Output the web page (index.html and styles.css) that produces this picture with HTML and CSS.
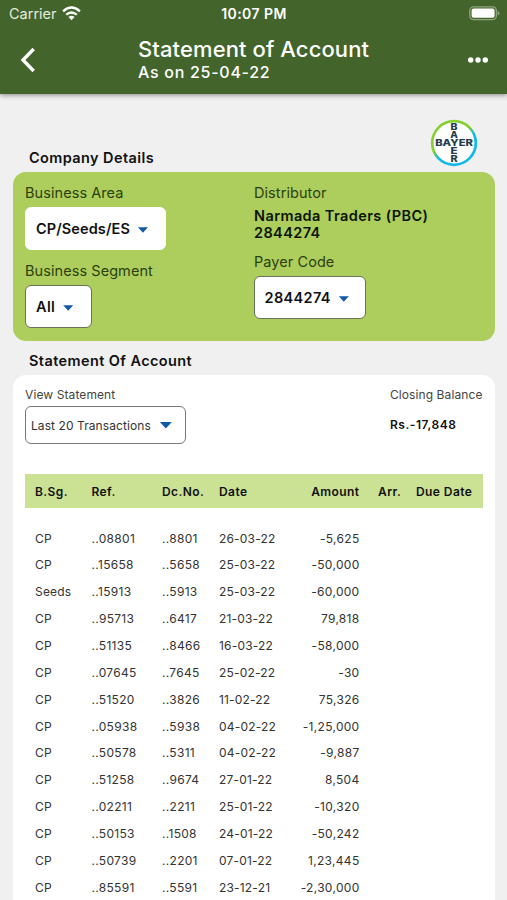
FILE: index.html
```html
<!DOCTYPE html>
<html lang="en">
<head>
<meta charset="utf-8">
<title>Statement of Account</title>
<link rel="stylesheet" href="styles.css">
</head>
<body>
<header class="appbar">
  <div class="status">
    <div class="carrier"><span>Carrier</span>
      <svg width="19" height="15" viewBox="0 0 19 15" fill="none" stroke="#fff" stroke-width="2.4"><path d="M1.1 5.4Q9.5-2.2 17.9 5.4M4.2 8.7Q9.5 4.2 14.8 8.7"/><path d="M6.4 10.9Q9.5 8.6 12.6 10.9L9.5 14.2Z" fill="#fff" stroke="none"/></svg>
    </div>
    <div class="clock">10:07 PM</div>
    <svg class="battery" width="31" height="15" viewBox="0 0 31 15"><rect x=".8" y=".8" width="26.6" height="12.8" rx="3.8" fill="none" stroke="#8fa57f" stroke-width="1.3"/><rect x="2.6" y="2.6" width="23" height="9.2" rx="2" fill="#fff"/><path d="M28.6 4.8Q30.4 5.6 30.4 7.2T28.6 9.6Z" fill="#8fa57f"/></svg>
  </div>
  <div class="nav">
    <svg class="back" width="16" height="26" viewBox="0 0 16 26"><path d="M13.7 2L3 13 13.7 24" fill="none" stroke="#fff" stroke-width="3.4"/></svg>
    <div class="titles"><h1>Statement of Account</h1><p>As on 25-04-22</p></div>
    <svg class="more" width="20" height="6" viewBox="0 0 20 6" fill="#fff"><circle cx="2.7" cy="3" r="2.7"/><circle cx="10" cy="3" r="2.7"/><circle cx="17.3" cy="3" r="2.7"/></svg>
  </div>
</header>
<main>
  <div class="section-head">
    <h2>Company Details</h2>
    <svg class="logo" width="48" height="48" viewBox="0 0 48 48">
      <defs><linearGradient id="ring" x1="0.2" y1="0.1" x2="0.75" y2="0.9"><stop offset=".4" stop-color="#83d030"/><stop offset=".62" stop-color="#10b8ee"/></linearGradient></defs>
      <circle cx="24" cy="24" r="21.8" fill="#fff" stroke="url(#ring)" stroke-width="2.7"/>
      <g class="logo-text"><text x="5.2" y="26.9" textLength="37.8" lengthAdjust="spacingAndGlyphs">BAYER</text>
      <text x="20.5" y="10.9" textLength="7" lengthAdjust="spacingAndGlyphs">B</text><text x="20.2" y="18.9" textLength="7.6" lengthAdjust="spacingAndGlyphs">A</text><text x="20.5" y="34.9" textLength="7" lengthAdjust="spacingAndGlyphs">E</text><text x="20.5" y="42.9" textLength="7.2" lengthAdjust="spacingAndGlyphs">R</text></g>
    </svg>
  </div>
  <section class="company">
    <div class="col">
      <div class="label">Business Area</div>
      <div class="select area">CP/Seeds/ES<i class="caret"></i></div>
      <div class="label segment">Business Segment</div>
      <div class="select seg">All<i class="caret"></i></div>
    </div>
    <div class="col">
      <div class="label">Distributor</div>
      <div class="dist">Narmada Traders (PBC)<br>2844274</div>
      <div class="label payer">Payer Code</div>
      <div class="select code">2844274<i class="caret"></i></div>
    </div>
  </section>
  <h2 class="soa">Statement Of Account</h2>
  <section class="statement">
    <div class="summary">
      <div><div class="small">View Statement</div><div class="period">Last 20 Transactions<i class="caret big"></i></div></div>
      <div><div class="small">Closing Balance</div><div class="balance">Rs.-17,848</div></div>
    </div>
    <div class="row head"><span>B.Sg.</span><span>Ref.</span><span>Dc.No.</span><span>Date</span><span class="num">Amount</span><span class="arr">Arr.</span><span>Due Date</span></div>
    <div class="rows">
      <div class="row"><span>CP</span><span>..08801</span><span>..8801</span><span>26-03-22</span><span class="num">-5,625</span></div>
      <div class="row"><span>CP</span><span>..15658</span><span>..5658</span><span>25-03-22</span><span class="num">-50,000</span></div>
      <div class="row"><span>Seeds</span><span>..15913</span><span>..5913</span><span>25-03-22</span><span class="num">-60,000</span></div>
      <div class="row"><span>CP</span><span>..95713</span><span>..6417</span><span>21-03-22</span><span class="num">79,818</span></div>
      <div class="row"><span>CP</span><span>..51135</span><span>..8466</span><span>16-03-22</span><span class="num">-58,000</span></div>
      <div class="row"><span>CP</span><span>..07645</span><span>..7645</span><span>25-02-22</span><span class="num">-30</span></div>
      <div class="row"><span>CP</span><span>..51520</span><span>..3826</span><span>11-02-22</span><span class="num">75,326</span></div>
      <div class="row"><span>CP</span><span>..05938</span><span>..5938</span><span>04-02-22</span><span class="num">-1,25,000</span></div>
      <div class="row"><span>CP</span><span>..50578</span><span>..5311</span><span>04-02-22</span><span class="num">-9,887</span></div>
      <div class="row"><span>CP</span><span>..51258</span><span>..9674</span><span>27-01-22</span><span class="num">8,504</span></div>
      <div class="row"><span>CP</span><span>..02211</span><span>..2211</span><span>25-01-22</span><span class="num">-10,320</span></div>
      <div class="row"><span>CP</span><span>..50153</span><span>..1508</span><span>24-01-22</span><span class="num">-50,242</span></div>
      <div class="row"><span>CP</span><span>..50739</span><span>..2201</span><span>07-01-22</span><span class="num">1,23,445</span></div>
      <div class="row"><span>CP</span><span>..85591</span><span>..5591</span><span>23-12-21</span><span class="num">-2,30,000</span></div>
    </div>
  </section>
</main>
</body>
</html>
```
FILE: styles.css
```css
* { box-sizing: border-box; margin: 0; padding: 0; }
body {
  height: 900px;
  overflow: hidden;
  display: flex;
  flex-direction: column;
  background: #f0f0f0;
  color: #111;
  font-family: Inter, "Liberation Sans", sans-serif;
  white-space: nowrap;
}
svg { display: block; flex: none; }
.appbar {
  height: 94px;
  flex: none;
  background: #43652b;
  color: #fff;
  box-shadow: 0 1px 5px rgba(0, 0, 0, .45);
}
.status {
  height: 28px;
  display: grid;
  grid-template-columns: 1fr auto 1fr;
  align-items: center;
  padding: 0 8px 0 9px;
  line-height: 28px;
}
.carrier { display: flex; align-items: center; gap: 5px; font-size: 14.5px; color: #e4eadf; }
.carrier svg { margin-top: -2px; }
.clock { font-weight: 600; font-size: 14px; letter-spacing: .45px; }
.battery { justify-self: end; margin: -1px -1px 0 0; }
.nav { height: 66px; display: flex; align-items: flex-start; }
.back { margin: 18.5px 0 0 20px; }
.titles { margin: 8px 0 0 102px; flex: 1; }
h1 { font-size: 22px; font-weight: 500; line-height: 27px; letter-spacing: .1px; }
.titles p { font-size: 16px; font-weight: 500; line-height: 19px; letter-spacing: .72px; }
.more { margin: 28.5px 19px 0 0; }
main { flex: 1; display: flex; flex-direction: column; padding: 0 12.5px 0 13px; }
.section-head { height: 78px; display: flex; justify-content: space-between; padding: 25px 16.5px 0 16px; }
h2 { font-size: 14.5px; font-weight: 600; line-height: 20px; letter-spacing: .4px; }
.section-head h2 { margin-top: 29.4px; }
.logo-text { font: 800 8.5px Inter, sans-serif; fill: #243b4b; }
.company {
  height: 168.6px;
  flex: none;
  display: grid;
  grid-template-columns: 229px 1fr;
  padding: 12px 12px 0;
  background: #adce5c;
  border-radius: 13px;
}
.label { font-size: 14.5px; line-height: 18px; letter-spacing: .07px; color: #2c3f10; }
.select {
  height: 43px;
  display: flex;
  align-items: center;
  gap: 8px;
  padding-left: 10px;
  margin-top: 5px;
  background: #fff;
  border: 1px solid #68715a;
  border-radius: 6px;
  font-size: 14.5px;
  font-weight: 600;
  letter-spacing: .1px;
}
.area { width: 141px; border-color: #fff; }
.seg { width: 67px; letter-spacing: .35px; }
.code { width: 112.4px; padding-left: 9.5px; letter-spacing: .35px; }
.segment { margin-top: 12px; }
.dist { margin-top: 5px; font-size: 14.5px; font-weight: 600; line-height: 17px; letter-spacing: .4px; color: #0b1500; }
.payer { margin-top: 12px; }
.caret { width: 10px; height: 5.5px; margin-top: 3px; background: #1259a6; clip-path: polygon(0 0, 100% 0, 50% 100%); }
.soa { margin: 10.4px 0 4px 16px; }
.statement { flex: 1; padding: 11.5px 12px 0; background: #fff; border-radius: 13px 13px 0 0; }
.summary { height: 87.3px; display: flex; justify-content: space-between; }
.small { font-size: 12px; line-height: 18px; letter-spacing: .1px; color: #444; }
.period {
  width: 161px;
  height: 37.5px;
  display: flex;
  align-items: center;
  gap: 9px;
  margin-top: 2px;
  padding-left: 5px;
  border: 1px solid #777;
  border-radius: 6px;
  font-size: 12px;
  letter-spacing: .08px;
  color: #333;
}
.big { width: 12px; height: 6.5px; margin-top: 0; }
.balance { margin-top: 11.5px; font-size: 12px; font-weight: 600; line-height: 18px; letter-spacing: .55px; }
.row {
  display: grid;
  grid-template-columns: 56.5px 70.5px 57px 60px 80.5px 18.5px 1fr;
  padding-left: 10px;
  height: 26.86px;
  line-height: 26.86px;
  font-size: 12px;
  letter-spacing: .3px;
  color: #333;
}
.row span:first-child, .row span:nth-child(4) { letter-spacing: .18px; }
.head { height: 34px; line-height: 35px; background: #cbe193; color: #111; font-weight: 600; grid-template-columns: 56.5px 70.5px 57px 60px 80.5px 56.5px 1fr; }
.row.head span { letter-spacing: .42px; }
.num { text-align: right; }
.arr { padding-left: 18.5px; }
.rows { padding-top: 17.8px; }
```
